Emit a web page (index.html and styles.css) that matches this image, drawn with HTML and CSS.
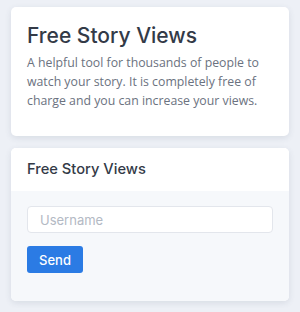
FILE: index.html
```html
<!doctype html>
<html lang="en">
	<head>
		<meta charset="UTF-8" />
		<title>Free Story Views</title>
		<link rel="stylesheet" href="styles.css">
	</head>
	<body>
		<section class="card intro">
			<h1>Free Story Views</h1>
			<p>A helpful tool for thousands of people to watch your story. It is completely free of charge and you can increase your views.</p>
		</section>
		<section class="card form-card">
			<div class="card-head">Free Story Views</div>
			<div class="card-body">
				<input type="text" class="field" placeholder="Username" />
				<button class="btn">Send</button>
			</div>
		</section>
	</body>
</html>
```

FILE: styles.css
```css
* {
	margin: 0;
	padding: 0;
	box-sizing: border-box;
}

body {
	background: #edf0f6;
	padding: 7px 11px;
	font-family: "Open Sans", sans-serif;
}

.card {
	background: #fff;
	border-radius: 5px;
	box-shadow: 0 2px 6px rgba(60, 70, 100, 0.12);
	overflow: hidden;
}

.intro {
	padding: 16px 16px 26px;
	margin-bottom: 12px;
}

.intro h1 {
	font-family: "Inter", sans-serif;
	font-weight: 500;
	font-size: 21px;
	color: #333a47;
	line-height: 26px;
	margin-bottom: 4px;
}

.intro p {
	font-size: 12.3px;
	line-height: 19px;
	color: #6b7280;
}

.card-head {
	font-family: "Inter", sans-serif;
	font-weight: 500;
	font-size: 14.7px;
	color: #333a47;
	padding: 11px 16px 12px;
	line-height: 20px;
	background: #fff;
}

.card-body {
	background: #f6f8fb;
	padding: 15px 16px 28px;
}

.field {
	display: block;
	width: 100%;
	height: 27px;
	border: 1px solid #e3e6ec;
	border-radius: 4px;
	background: #fff;
	padding: 0 12px;
	font-family: "Inter", sans-serif;
	font-size: 13px;
	color: #333;
	margin-bottom: 13px;
}

.field::placeholder {
	color: #b3b9c4;
}

.btn {
	display: block;
	width: 56px;
	height: 27px;
	border: none;
	border-radius: 3px;
	background: #2b7be4;
	color: #fff;
	font-family: "Inter", sans-serif;
	font-weight: 500;
	font-size: 13px;
}
```
